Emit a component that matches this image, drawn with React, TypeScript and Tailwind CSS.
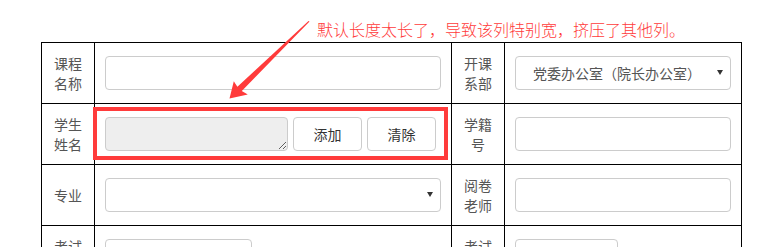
import { ReactNode } from 'react';

const font = { fontFamily: '"Microsoft YaHei", "Noto Sans CJK SC", "Noto Sans", sans-serif' };

const Label = ({ children }: { children: ReactNode }) => (
    <div className="flex items-center justify-center border-r border-b border-black px-[12px] text-center text-[14px] leading-[20px] text-[#555]">
        <span className="w-[28px]">{children}</span>
    </div>
);

const Cell = ({ children }: { children: ReactNode }) => (
    <div className="flex items-center border-r border-b border-black px-[10px]">{children}</div>
);

const inputCls = 'h-[34px] rounded-[4px] border border-[#ccc] bg-white text-[14px] text-[#555] outline-none';

const Select = ({ value, className = '' }: { value?: string; className?: string }) => (
    <div className={`relative ${className}`}>
        <select className={`${inputCls} w-full appearance-none pl-[17px] pr-[24px]`} defaultValue={value ?? ''}>
            <option value={value ?? ''}>{value ?? ''}</option>
        </select>
        <svg className="pointer-events-none absolute right-[8px] top-[14px]" width="6" height="5" viewBox="0 0 6 5">
            <path d="M0 0H6L3 5Z" fill="#333" />
        </svg>
    </div>
);

const Button = ({ children }: { children: ReactNode }) => (
    <button className="h-[34px] w-[69px] rounded-[4px] border border-[#ccc] bg-white text-[14px] text-[#333]">
        {children}
    </button>
);

export default function App() {
    return (
        <div className="relative h-[247px] w-[762px] overflow-hidden bg-white" style={font}>
            <div className="h-[42px] pl-[317px] pt-[19px] text-[16px] font-light leading-[20px] text-[#ff3b3b]">
                默认长度太长了，导致该列特别宽，挤压了其他列。
            </div>

            <div className="ml-[41px] grid w-[701px] grid-cols-[53px_357px_53px_237px] auto-rows-[61px] border-l border-t border-black">
                <Label>课程名称</Label>
                <Cell>
                    <input className={`${inputCls} w-full px-3`} />
                </Cell>
                <Label>开课系部</Label>
                <Cell>
                    <Select value="党委办公室（院长办公室）" className="w-full" />
                </Cell>

                <Label>学生姓名</Label>
                <Cell>
                    <div className="flex items-center gap-[5px]">
                        <textarea
                            readOnly
                            className="block h-[34px] w-[183px] rounded-[4px] border border-[#ccc] bg-[#eee] outline-none"
                        />
                        <Button>添加</Button>
                        <Button>清除</Button>
                    </div>
                </Cell>
                <Label>学籍号</Label>
                <Cell>
                    <input className={`${inputCls} w-full px-3`} />
                </Cell>

                <Label>专业</Label>
                <Cell>
                    <Select className="w-full" />
                </Cell>
                <Label>阅卷老师</Label>
                <Cell>
                    <input className={`${inputCls} w-full px-3`} />
                </Cell>

                <Label>考试时间</Label>
                <Cell>
                    <input className={`${inputCls} w-[147px] px-3`} />
                </Cell>
                <Label>考试地点</Label>
                <Cell>
                    <input className={`${inputCls} w-[103px] px-3`} />
                </Cell>
            </div>

            {/* annotation overlay: red frame + arrow */}
            <div className="pointer-events-none absolute left-[93px] top-[107px] h-[53px] w-[355px] border-[4px] border-[#ff3b3b]" />
            <svg className="pointer-events-none absolute left-0 top-0" width="762" height="247">
                <polygon
                    points="309.5,21.5 241.8,91 247.8,94.6 229.5,98.5 233.8,81.2 237.4,86.8 308.5,21"
                    fill="#ff3b3b"
                />
            </svg>
        </div>
    );
}
